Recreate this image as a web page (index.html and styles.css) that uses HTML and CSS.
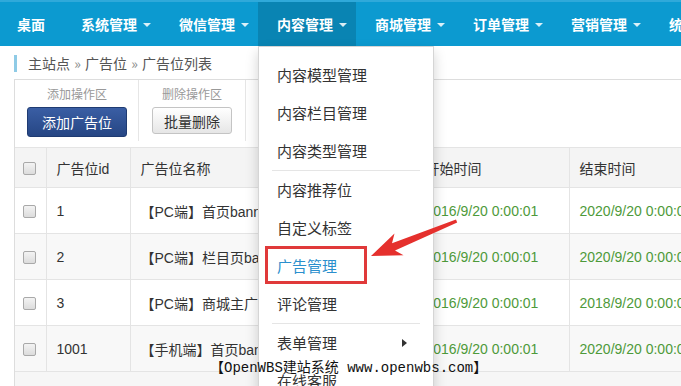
FILE: index.html
```html
<!DOCTYPE html>
<html lang="zh-CN">
<head>
  <meta charset="UTF-8" />
  <meta name="viewport" content="width=device-width, initial-scale=1.0" />
  <title>广告位列表</title>
  <link rel="stylesheet" href="styles.css">
</head>
<body>

  <div class="navbar">
    <ul class="nav">
      <li class="nav-item home">桌面</li>
      <li class="nav-item">系统管理<span class="caret"></span></li>
      <li class="nav-item">微信管理<span class="caret"></span></li>
      <li class="nav-item active">内容管理<span class="caret"></span>
        <ul class="dropdown">
          <li>内容模型管理</li>
          <li>内容栏目管理</li>
          <li>内容类型管理</li>
          <li class="divider"></li>
          <li>内容推荐位</li>
          <li>自定义标签</li>
          <li class="current">广告管理<span class="mark"></span></li>
          <li>评论管理</li>
          <li class="divider"></li>
          <li class="has-sub">表单管理<span class="sub-arrow"></span></li>
          <li>在线客服</li>
        </ul>
      </li>
      <li class="nav-item">商城管理<span class="caret"></span></li>
      <li class="nav-item">订单管理<span class="caret"></span></li>
      <li class="nav-item">营销管理<span class="caret"></span></li>
      <li class="nav-item">统计管理<span class="caret"></span></li>
    </ul>
  </div>

  <div class="breadcrumb">主站点 <span class="sep">»</span> 广告位 <span class="sep">»</span> 广告位列表</div>

  <div class="panel">
    <div class="toolbar">
      <div class="tool-group">
        <div class="tool-label">添加操作区</div>
        <button class="btn btn-primary">添加广告位</button>
      </div>
      <div class="tool-group">
        <div class="tool-label">删除操作区</div>
        <button class="btn btn-default">批量删除</button>
      </div>
    </div>

    <table class="grid">
      <colgroup>
        <col style="width:31px">
        <col style="width:84px">
        <col style="width:285px">
        <col style="width:154px">
        <col style="width:180px">
        <col>
      </colgroup>
      <thead>
        <tr>
          <th class="cb"><input type="checkbox" /></th>
          <th>广告位id</th>
          <th>广告位名称</th>
          <th>开始时间</th>
          <th>结束时间</th>
          <th>操作</th>
        </tr>
      </thead>
      <tbody>
        <tr>
          <td class="cb"><input type="checkbox" /></td>
          <td>1</td>
          <td class="name">【PC端】首页banner轮播</td>
          <td class="date">2016/9/20 0:00:01</td>
          <td class="date">2020/9/20 0:00:01</td>
          <td>编辑</td>
        </tr>
        <tr>
          <td class="cb"><input type="checkbox" /></td>
          <td>2</td>
          <td class="name">【PC端】栏目页banner</td>
          <td class="date">2016/9/20 0:00:01</td>
          <td class="date">2020/9/20 0:00:01</td>
          <td>编辑</td>
        </tr>
        <tr>
          <td class="cb"><input type="checkbox" /></td>
          <td>3</td>
          <td class="name">【PC端】商城主广告</td>
          <td class="date">2016/9/20 0:00:01</td>
          <td class="date">2018/9/20 0:00:01</td>
          <td>编辑</td>
        </tr>
        <tr>
          <td class="cb"><input type="checkbox" /></td>
          <td>1001</td>
          <td class="name">【手机端】首页banner</td>
          <td class="date">2016/9/20 0:00:01</td>
          <td class="date">2020/9/20 0:00:01</td>
          <td>编辑</td>
        </tr>
      </tbody>
    </table>
    <div class="panel-foot"></div>
  </div>

  <!-- annotation arrow pointing at 广告管理 -->
  <svg class="annot-arrow" width="110" height="60" viewBox="0 0 110 60">
    <polygon points="11,46 34.5,23.5 32,33.2 96,9.5 97.2,12.6 35,40.4 43.5,45.2" fill="#e5302d" />
  </svg>

  <div class="watermark">【OpenWBS建站系统 www.openwbs.com】</div>

</body>
</html>
```

FILE: styles.css
```css
html, body {
  overflow: hidden;
}

body {
  margin: 0;
  position: relative;
  height: 386px;
  font-family: "Liberation Sans", "Noto Sans CJK SC", sans-serif;
  font-size: 14px;
  color: #333;
  background: #fff;
}

ul {
  list-style: none;
  margin: 0;
  padding: 0;
}

/* top navigation */
.navbar {
  background: #0c9ad0;
  border-top: 2px solid #2fa9da;
  height: 44px;
  white-space: nowrap;
}

.nav {
  display: flex;
  height: 44px;
}

.nav-item {
  position: relative;
  flex: none;
  display: flex;
  align-items: center;
  padding: 0 9px 0 19px;
  color: #fff;
  font-weight: bold;
  font-size: 14px;
  font-family: "Noto Sans CJK SC", sans-serif;
}

.nav-item.home {
  padding: 0 17px;
}

.nav-item.active {
  background: #0984b3;
}

.caret {
  display: inline-block;
  margin-left: 6px;
  margin-top: 2px;
  border-top: 4px solid rgba(255, 255, 255, 0.85);
  border-left: 4px solid transparent;
  border-right: 4px solid transparent;
}

/* dropdown menu */
.dropdown {
  position: absolute;
  top: 100%;
  left: 0;
  width: 174px;
  padding: 9px 0;
  background: #fff;
  border: 1px solid #d5d5d5;
  box-shadow: 0 6px 12px rgba(0, 0, 0, 0.18);
  z-index: 10;
}

.dropdown li {
  position: relative;
  height: 38px;
  line-height: 38px;
  padding: 0 18px;
  font-size: 15px;
  font-weight: normal;
  color: #333;
}

.dropdown li.divider {
  height: 1px;
  padding: 0;
  margin: 0 13px;
  background: #e5e5e5;
}

.dropdown li.current {
  color: #2b8fcd;
}

.mark {
  position: absolute;
  left: 6px;
  top: -1px;
  width: 96px;
  height: 32px;
  border: 3px solid #e0393a;
}

.sub-arrow {
  position: absolute;
  right: 26px;
  top: 15px;
  border-left: 5px solid #333;
  border-top: 4px solid transparent;
  border-bottom: 4px solid transparent;
}

/* breadcrumb */
.breadcrumb {
  margin: 9px 0 7px 14px;
  padding-left: 11px;
  border-left: 3px solid #8fcbe6;
  height: 17px;
  line-height: 17px;
  font-family: "Noto Sans CJK SC", sans-serif;
  color: #555;
}

.breadcrumb .sep {
  color: #888;
  font-size: 14px;
  margin: 0 1px;
}

/* content panel */
.panel {
  margin-left: 14px;
  width: 1000px;
  border-left: 1px solid #ddd;
  border-top: 1px solid #ddd;
  background: #f6f6f6;
}

.toolbar {
  display: flex;
  background: #fff;
  height: 67px;
}

.tool-group {
  display: flex;
  flex-direction: column;
  align-items: center;
  padding: 5px 11px 0 12px;
  margin-bottom: 6px;
  border-right: 1px solid #e6e6e6;
}

.tool-group + .tool-group {
  padding: 5px 13px 0 13px;
}

.tool-label {
  font-size: 12px;
  line-height: 18px;
  color: #999;
  font-family: "Noto Sans CJK SC", sans-serif;
}

.btn {
  margin-top: 4px;
  font-family: "Noto Sans CJK SC", sans-serif;
  font-size: 14px;
  border-radius: 3px;
  cursor: pointer;
  padding: 0;
}

.btn-primary {
  width: 100px;
  height: 30px;
  color: #fff;
  background: linear-gradient(#3a5ea4, #264684);
  border: 1px solid #1f3b72;
}

.btn-default {
  width: 80px;
  height: 27px;
  color: #333;
  background: linear-gradient(#fff, #e6e6e6);
  border: 1px solid #c4c4c4;
}

/* table */
.grid {
  width: 100%;
  border-collapse: collapse;
  table-layout: fixed;
  background: #fff;
}

.grid th,
.grid td {
  padding: 0 10px;
  text-align: left;
  white-space: nowrap;
  overflow: hidden;
  border: 1px solid #e4e4e4;
  border-left: none;
}

.grid th {
  height: 39px;
  font-weight: normal;
  background: #f4f4f4;
}

.grid td {
  height: 45px;
}

.grid tbody tr:nth-child(even) td {
  background: #f8f8f8;
}

.grid .cb {
  padding: 0;
  text-align: center;
}

.grid .date {
  color: #4e9a3a;
}

.grid input[type="checkbox"] {
  -webkit-appearance: none;
  appearance: none;
  width: 13px;
  height: 13px;
  margin: 4px 0 0 -2px;
  border: 1px solid #a9a9a9;
  border-radius: 2px;
  background: linear-gradient(#f3f3f3, #dcdcdc);
}

.panel-foot {
  height: 30px;
  background: #f6f6f6;
}

/* annotation overlay */
.annot-arrow {
  position: absolute;
  left: 360px;
  top: 210px;
  z-index: 15;
}

.watermark {
  position: absolute;
  left: 210px;
  top: 358px;
  font-family: "Liberation Mono", "Noto Sans CJK SC", monospace;
  font-size: 14px;
  line-height: 20px;
  color: #111;
  white-space: nowrap;
  z-index: 20;
}
```
